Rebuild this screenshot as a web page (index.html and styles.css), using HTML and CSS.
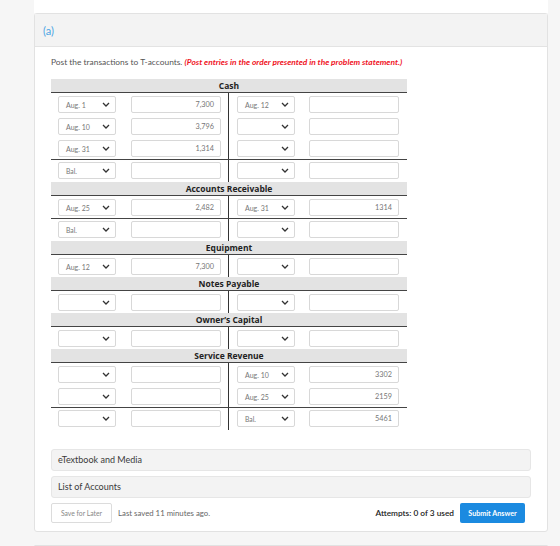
FILE: index.html
```html
<!DOCTYPE html>
<html lang="en">
<head>
  <meta charset="UTF-8" />
  <title>T-Accounts</title>
  <link rel="stylesheet" href="styles.css">
</head>
<body>
  <div class="page">
    <div class="top-strip"></div>

    <div class="card">
      <div class="card-head">(a)</div>
      <div class="card-body">
        <p class="prompt">Post the transactions to T-accounts. <em>(Post entries in the order presented in the problem statement.)</em></p>

        <div class="taccounts">
          <!-- Cash -->
          <div class="acct-title">Cash</div>
          <div class="row">
            <div class="half left"><div class="sel"><span>Aug. 1</span><svg viewBox="0 0 8 5"><path d="M1 1l3 3 3-3"/></svg></div><div class="amt">7,300</div></div>
            <div class="half right"><div class="sel"><span>Aug. 12</span><svg viewBox="0 0 8 5"><path d="M1 1l3 3 3-3"/></svg></div><div class="amt"></div></div>
          </div>
          <div class="row">
            <div class="half left"><div class="sel"><span>Aug. 10</span><svg viewBox="0 0 8 5"><path d="M1 1l3 3 3-3"/></svg></div><div class="amt">3,796</div></div>
            <div class="half right"><div class="sel"><span></span><svg viewBox="0 0 8 5"><path d="M1 1l3 3 3-3"/></svg></div><div class="amt"></div></div>
          </div>
          <div class="row">
            <div class="half left"><div class="sel"><span>Aug. 31</span><svg viewBox="0 0 8 5"><path d="M1 1l3 3 3-3"/></svg></div><div class="amt">1,314</div></div>
            <div class="half right"><div class="sel"><span></span><svg viewBox="0 0 8 5"><path d="M1 1l3 3 3-3"/></svg></div><div class="amt"></div></div>
          </div>
          <div class="row total">
            <div class="half left"><div class="sel"><span class="bal">Bal.</span><svg viewBox="0 0 8 5"><path d="M1 1l3 3 3-3"/></svg></div><div class="amt"></div></div>
            <div class="half right"><div class="sel"><span></span><svg viewBox="0 0 8 5"><path d="M1 1l3 3 3-3"/></svg></div><div class="amt"></div></div>
          </div>

          <!-- Accounts Receivable -->
          <div class="acct-title">Accounts Receivable</div>
          <div class="row">
            <div class="half left"><div class="sel"><span>Aug. 25</span><svg viewBox="0 0 8 5"><path d="M1 1l3 3 3-3"/></svg></div><div class="amt">2,482</div></div>
            <div class="half right"><div class="sel"><span>Aug. 31</span><svg viewBox="0 0 8 5"><path d="M1 1l3 3 3-3"/></svg></div><div class="amt">1314</div></div>
          </div>
          <div class="row total">
            <div class="half left"><div class="sel"><span class="bal">Bal.</span><svg viewBox="0 0 8 5"><path d="M1 1l3 3 3-3"/></svg></div><div class="amt"></div></div>
            <div class="half right"><div class="sel"><span></span><svg viewBox="0 0 8 5"><path d="M1 1l3 3 3-3"/></svg></div><div class="amt"></div></div>
          </div>

          <!-- Equipment -->
          <div class="acct-title">Equipment</div>
          <div class="row">
            <div class="half left"><div class="sel"><span>Aug. 12</span><svg viewBox="0 0 8 5"><path d="M1 1l3 3 3-3"/></svg></div><div class="amt">7,300</div></div>
            <div class="half right"><div class="sel"><span></span><svg viewBox="0 0 8 5"><path d="M1 1l3 3 3-3"/></svg></div><div class="amt"></div></div>
          </div>

          <!-- Notes Payable -->
          <div class="acct-title">Notes Payable</div>
          <div class="row">
            <div class="half left"><div class="sel"><span></span><svg viewBox="0 0 8 5"><path d="M1 1l3 3 3-3"/></svg></div><div class="amt"></div></div>
            <div class="half right"><div class="sel"><span></span><svg viewBox="0 0 8 5"><path d="M1 1l3 3 3-3"/></svg></div><div class="amt"></div></div>
          </div>

          <!-- Owner's Capital -->
          <div class="acct-title">Owner’s Capital</div>
          <div class="row">
            <div class="half left"><div class="sel"><span></span><svg viewBox="0 0 8 5"><path d="M1 1l3 3 3-3"/></svg></div><div class="amt"></div></div>
            <div class="half right"><div class="sel"><span></span><svg viewBox="0 0 8 5"><path d="M1 1l3 3 3-3"/></svg></div><div class="amt"></div></div>
          </div>

          <!-- Service Revenue -->
          <div class="acct-title">Service Revenue</div>
          <div class="row">
            <div class="half left"><div class="sel"><span></span><svg viewBox="0 0 8 5"><path d="M1 1l3 3 3-3"/></svg></div><div class="amt"></div></div>
            <div class="half right"><div class="sel"><span>Aug. 10</span><svg viewBox="0 0 8 5"><path d="M1 1l3 3 3-3"/></svg></div><div class="amt">3302</div></div>
          </div>
          <div class="row">
            <div class="half left"><div class="sel"><span></span><svg viewBox="0 0 8 5"><path d="M1 1l3 3 3-3"/></svg></div><div class="amt"></div></div>
            <div class="half right"><div class="sel"><span>Aug. 25</span><svg viewBox="0 0 8 5"><path d="M1 1l3 3 3-3"/></svg></div><div class="amt">2159</div></div>
          </div>
          <div class="row total">
            <div class="half left"><div class="sel"><span></span><svg viewBox="0 0 8 5"><path d="M1 1l3 3 3-3"/></svg></div><div class="amt"></div></div>
            <div class="half right"><div class="sel"><span class="bal">Bal.</span><svg viewBox="0 0 8 5"><path d="M1 1l3 3 3-3"/></svg></div><div class="amt">5461</div></div>
          </div>
        </div>

        <div class="panel first">eTextbook and Media</div>
        <div class="panel">List of Accounts</div>

        <div class="actions">
          <button class="btn-save">Save for Later</button>
          <span class="saved">Last saved 11 minutes ago.</span>
          <span class="attempts">Attempts: 0 of 3 used</span>
          <button class="btn-submit">Submit Answer</button>
        </div>
      </div>
    </div>

    <div class="card next"></div>
  </div>
</body>
</html>
```

FILE: styles.css
```css
* {
  box-sizing: border-box;
}

body {
  margin: 0;
  background: #f6f6f6;
  font-family: Lato, "Open Sans", sans-serif;
  color: #444;
  overflow: hidden;
}

.page {
  margin-left: 34px;
  width: 514px;
}

.top-strip {
  height: 13px;
  background: #fff;
}

.card {
  background: #fff;
  border: 1px solid #e2e2e2;
  border-radius: 3px;
}

.card-head {
  height: 33px;
  background: #f3f3f3;
  border-bottom: 1px solid #e3e3e3;
  padding-left: 8px;
  line-height: 33px;
  font-size: 11px;
  color: #4ba5e4;
}

.card-body {
  padding: 9px 16px 8px 16px;
}

.prompt {
  margin: 0 0 11px;
  font-size: 8.4px;
  line-height: 12px;
  color: #555;
  white-space: nowrap;
}

.prompt em {
  color: #f0141e;
  font-weight: bold;
}

.taccounts {
  width: 356px;
}

.acct-title {
  height: 14px;
  background: #e3e3e3;
  border-bottom: 1px solid #444;
  text-align: center;
  font-family: "Open Sans", sans-serif;
  font-weight: bold;
  font-size: 8.5px;
  line-height: 13px;
  color: #222;
}

.row {
  display: flex;
  height: 22px;
  padding-top: 3px;
}

.row.total {
  height: 23px;
  border-top: 1px solid #444;
  padding-top: 2px;
}

.half {
  display: flex;
  height: 100%;
}

.half.left {
  width: 177px;
  padding-left: 7px;
  gap: 15px;
}

.half.right {
  width: 179px;
  margin-top: -3px;
  padding-top: 3px;
  height: calc(100% + 3px);
  border-left: 1px solid #333;
  padding-left: 8px;
  gap: 14px;
}

.row.total .half.right {
  margin-top: -2px;
  padding-top: 2px;
  height: calc(100% + 2px);
}

.sel,
.amt {
  height: 17px;
  border: 1px solid #d8d8d8;
  border-radius: 2px;
  background: #fff;
  color: #777;
}

.sel {
  width: 58px;
  display: flex;
  align-items: center;
  justify-content: space-between;
  padding: 0 5px 0 7px;
  font-size: 7px;
}

.sel .bal {
  font-size: 6.8px;
}

.sel svg {
  width: 8px;
  height: 5px;
  fill: none;
  stroke: #333;
  stroke-width: 1.3;
}

.amt {
  width: 90px;
  text-align: right;
  padding-right: 6px;
  font-size: 7.3px;
  line-height: 15px;
}

.panel {
  height: 22px;
  margin-top: 5px;
  width: 480px;
  background: #f3f3f3;
  border: 1px solid #e6e6e6;
  border-radius: 3px;
  padding-left: 6px;
  font-size: 9px;
  line-height: 20px;
  color: #3a3a3a;
}

.panel.first {
  margin-top: 19px;
}

.actions {
  display: flex;
  align-items: center;
  margin-top: 5px;
  height: 20px;
  padding-right: 6px;
}

.btn-save {
  width: 61px;
  height: 20px;
  padding: 0;
  background: #fff;
  border: 1px solid #dcdcdc;
  border-radius: 2px;
  font-family: Lato, sans-serif;
  font-size: 6.8px;
  color: #888;
}

.saved {
  margin-left: 6px;
  font-size: 7.8px;
  color: #666;
}

.attempts {
  margin-left: auto;
  font-size: 8.3px;
  font-weight: 600;
  color: #222;
}

.btn-submit {
  margin-left: 6px;
  width: 65px;
  height: 20px;
  padding: 0;
  background: #1b8ae0;
  border: none;
  border-radius: 2px;
  font-family: Lato, sans-serif;
  font-size: 7.2px;
  font-weight: bold;
  color: #fff;
}

.card.next {
  margin-top: 13px;
  height: 2px;
}
```
